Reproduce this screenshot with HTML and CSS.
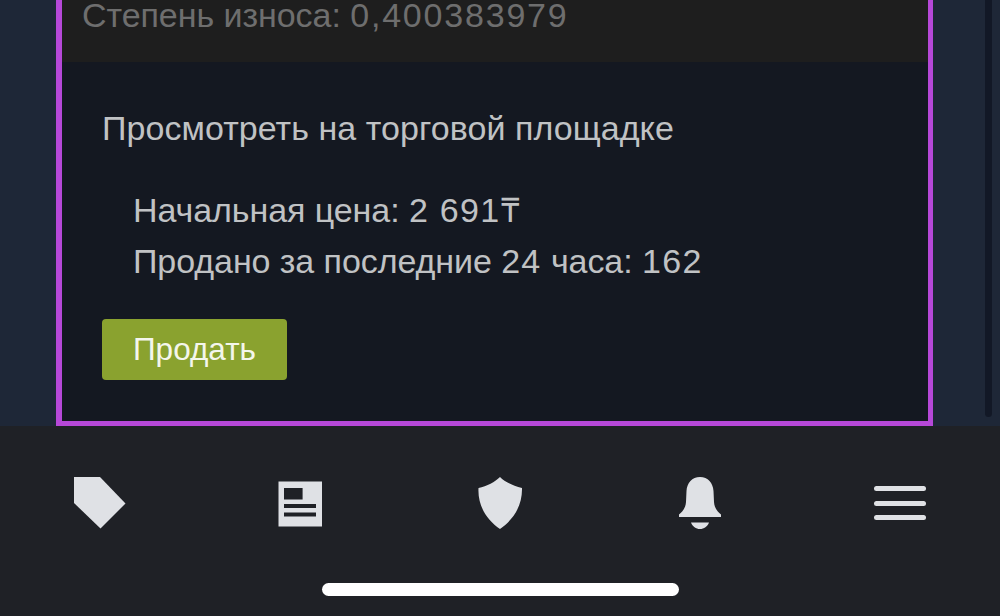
FILE: index.html
```html
<!DOCTYPE html>
<html lang="ru">
<head>
<meta charset="utf-8">
<title>Продать</title>
<link rel="stylesheet" href="styles.css">
</head>
<body>
<div class="screen">
  <main class="content">
    <section class="card">
      <div class="wear">Степень износа: <span class="num-wide">0,400383979</span></div>
      <div class="market">
        <h2 class="market-title">Просмотреть на торговой площадке</h2>
        <div class="stats">
          <p class="stat">Начальная цена: <span class="num">2 691</span>₸</p>
          <p class="stat">Продано за последние <span class="num">24</span> часа: <span class="num">162</span></p>
        </div>
        <button class="sell">Продать</button>
      </div>
    </section>
    <div class="scrollbar"></div>
  </main>
  <nav class="nav">
    <div class="tabs">
      <a class="tab"><svg class="icon" viewBox="0 0 60 60"><path d="M4 4H30L55.500 30.500 30.500 55.500 4 30Z"/></svg></a>
      <a class="tab"><svg class="icon" viewBox="0 0 60 60"><path fill-rule="evenodd" d="M8.500 8.500H52V53.500H8.500ZM14 15V26.500H32.600V15ZM14 31V35H46V31ZM14 39.500V43.500H46V39.500Z"/></svg></a>
      <a class="tab"><svg class="icon" viewBox="0 0 60 60"><path d="M30 4C35 9 43 13 52 15 52.500 33 43 47 30 56 17 47 7.500 33 8.500 15 17 13 25 9 30 4Z"/></svg></a>
      <a class="tab"><svg class="icon" viewBox="0 0 60 60"><path d="M30 4C38 4 43 10 43.500 18L44 29C44.500 35 47 38 51 41.500V44H9V41.500C13 38 15.500 35 16 29L16.500 18C17 10 22 4 30 4ZM21 49.500H39C37.500 53.500 34 56 30 56 26 56 22.500 53.500 21 49.500Z"/></svg></a>
      <a class="tab"><svg class="icon" viewBox="0 0 60 60"><rect x="4" y="13" width="52" height="5" rx="2.500"/><rect x="4" y="28" width="52" height="5" rx="2.500"/><rect x="4" y="42" width="52" height="5" rx="2.500"/></svg></a>
    </div>
    <div class="home"></div>
  </nav>
</div>
</body>
</html>
```
FILE: styles.css
```css
* { box-sizing: border-box; }
html, body { margin: 0; padding: 0; background: #1f2126; }
body { width: 1000px; height: 616px; overflow: hidden; font-family: "Liberation Sans", Arial, sans-serif; }
.screen { display: flex; flex-direction: column; height: 616px; }
.content {
  position: relative;
  height: 426px;
  padding: 0 67px 0 56px;
  background: #1e2737;
  overflow: hidden;
}
.card {
  height: 426px;
  border: solid #b648d8;
  border-width: 0 5px 5px 6px;
  background: #141821;
}
.wear {
  height: 62px;
  padding: 0 0 0 20px;
  background: #1e1e1e;
  color: #6e6e6e;
  font-size: 34px;
  line-height: 30px;
  letter-spacing: -0.05px;
}
.num-wide { letter-spacing: 1.8px; }
.num { letter-spacing: 1.3px; }
.market { padding: 46px 0 0 40px; }
.market-title {
  margin: 0;
  color: #c0c2c4;
  font-size: 34px;
  font-weight: 400;
  line-height: 40px;
  letter-spacing: 0.06px;
}
.stats { margin: 37px 0 0 31px; }
.stat {
  margin: 0;
  color: #c0c2c4;
  font-size: 34px;
  line-height: 51px;
  letter-spacing: -0.07px;
}
.sell {
  display: block;
  width: 185px;
  height: 61px;
  margin-top: 32px;
  padding: 0;
  border: 0;
  border-radius: 4px;
  background: #8aa22f;
  color: #f4f6ec;
  font: 400 31.500px "Liberation Sans", Arial, sans-serif;
}
.scrollbar {
  position: absolute;
  top: 0;
  left: 985px;
  width: 7px;
  height: 417px;
  border-radius: 0 0 4px 4px;
  background: #121826;
}
.nav { flex: 1; display: flex; flex-direction: column; align-items: center; background: #1f2126; }
.tabs {
  display: grid;
  grid-template-columns: repeat(5, 200px);
  width: 1000px;
  padding-top: 47px;
}
.tab { display: flex; justify-content: center; }
.icon { display: block; width: 60px; height: 60px; fill: #dfe1e5; }
.home {
  width: 357px;
  height: 13px;
  margin-top: 50px;
  border-radius: 7px;
  background: #fff;
}
```
